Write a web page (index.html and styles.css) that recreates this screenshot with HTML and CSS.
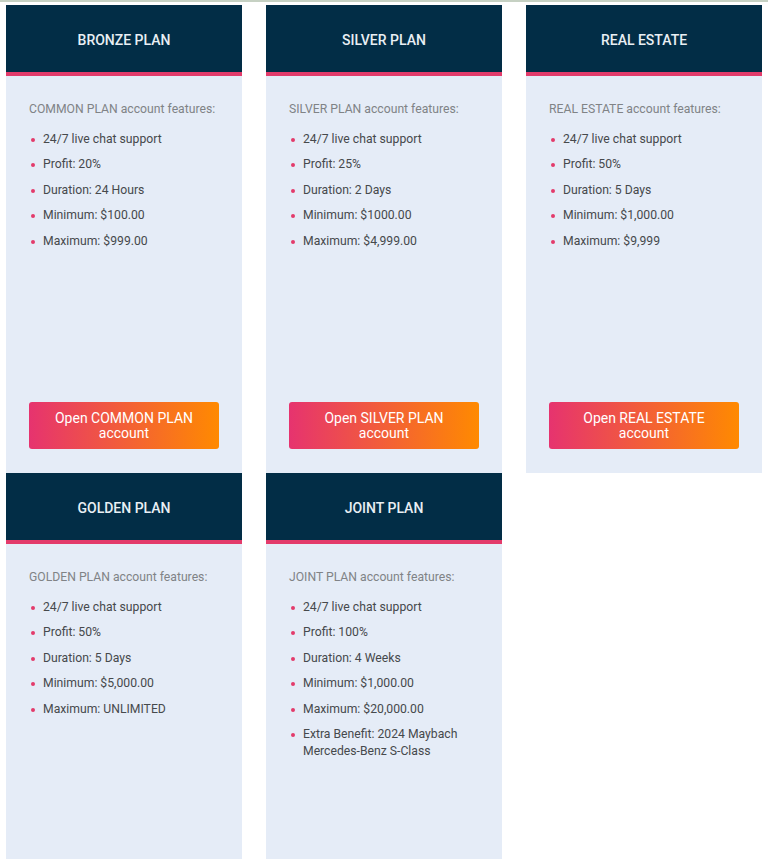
FILE: index.html
```html
<!DOCTYPE html>
<html lang="en">
<head>
  <meta charset="UTF-8" />
  <meta name="viewport" content="width=device-width, initial-scale=1.0"/>
  <title>Investment Plans</title>
  <link rel="stylesheet" href="styles.css">
</head>
<body>

  <div class="plans">
    <!-- Bronze -->
    <div class="plan-card">
      <div class="plan-header">BRONZE PLAN</div>
      <div class="plan-body">
        <p class="plan-intro">COMMON PLAN account features:</p>
        <ul class="plan-list">
          <li>24/7 live chat support</li>
          <li>Profit: 20%</li>
          <li>Duration: 24 Hours</li>
          <li>Minimum: $100.00</li>
          <li>Maximum: $999.00</li>
        </ul>
        <a class="plan-btn" href="#">Open COMMON PLAN<br>account</a>
      </div>
    </div>

    <!-- Silver -->
    <div class="plan-card">
      <div class="plan-header">SILVER PLAN</div>
      <div class="plan-body">
        <p class="plan-intro">SILVER PLAN account features:</p>
        <ul class="plan-list">
          <li>24/7 live chat support</li>
          <li>Profit: 25%</li>
          <li>Duration: 2 Days</li>
          <li>Minimum: $1000.00</li>
          <li>Maximum: $4,999.00</li>
        </ul>
        <a class="plan-btn" href="#">Open SILVER PLAN<br>account</a>
      </div>
    </div>

    <!-- Real estate -->
    <div class="plan-card">
      <div class="plan-header">REAL ESTATE</div>
      <div class="plan-body">
        <p class="plan-intro">REAL ESTATE account features:</p>
        <ul class="plan-list">
          <li>24/7 live chat support</li>
          <li>Profit: 50%</li>
          <li>Duration: 5 Days</li>
          <li>Minimum: $1,000.00</li>
          <li>Maximum: $9,999</li>
        </ul>
        <a class="plan-btn" href="#">Open REAL ESTATE<br>account</a>
      </div>
    </div>

    <!-- Golden -->
    <div class="plan-card">
      <div class="plan-header">GOLDEN PLAN</div>
      <div class="plan-body">
        <p class="plan-intro">GOLDEN PLAN account features:</p>
        <ul class="plan-list">
          <li>24/7 live chat support</li>
          <li>Profit: 50%</li>
          <li>Duration: 5 Days</li>
          <li>Minimum: $5,000.00</li>
          <li>Maximum: UNLIMITED</li>
        </ul>
        <a class="plan-btn" href="#">Open GOLDEN PLAN<br>account</a>
      </div>
    </div>

    <!-- Joint -->
    <div class="plan-card">
      <div class="plan-header">JOINT PLAN</div>
      <div class="plan-body">
        <p class="plan-intro">JOINT PLAN account features:</p>
        <ul class="plan-list">
          <li>24/7 live chat support</li>
          <li>Profit: 100%</li>
          <li>Duration: 4 Weeks</li>
          <li>Minimum: $1,000.00</li>
          <li>Maximum: $20,000.00</li>
          <li>Extra Benefit: 2024 Maybach Mercedes-Benz S-Class</li>
        </ul>
        <a class="plan-btn" href="#">Open JOINT PLAN<br>account</a>
      </div>
    </div>
  </div>

</body>
</html>
```

FILE: styles.css
```css
* {
  box-sizing: border-box;
  margin: 0;
  padding: 0;
}

body {
  font-family: Roboto, 'Liberation Sans', sans-serif;
  background: #fff;
  border-top: 2px solid #c6d1c3;
  padding: 3px 6px 0;
  overflow: hidden;
}

/* Grid of plan cards */
.plans {
  display: grid;
  grid-template-columns: repeat(3, 236px);
  column-gap: 24px;
  row-gap: 0;
}

.plan-card {
  display: flex;
  flex-direction: column;
  background: #e5ecf7;
}

.plan-header {
  height: 71px;
  display: flex;
  justify-content: center;
  align-items: center;
  background: #022d46;
  border-bottom: 4px solid #e33b6b;
  color: #e9eff4;
  font-size: 14px;
  font-weight: 500;
  padding-top: 3px;
}

.plan-body {
  display: flex;
  flex-direction: column;
  min-height: 397px;
  padding: 22.5px 23px 24px;
}

.plan-intro {
  font-size: 12.2px;
  line-height: 20px;
  color: #808386;
  margin-bottom: 12px;
  white-space: nowrap;
}

.plan-list {
  list-style: none;
  margin-bottom: 24px;
}

.plan-list li {
  position: relative;
  padding-left: 14px;
  font-size: 12.2px;
  line-height: 17px;
  color: #46494c;
  margin-bottom: 8.6px;
}

.plan-list li::before {
  content: "";
  position: absolute;
  left: 2px;
  top: 7px;
  width: 4px;
  height: 4px;
  border-radius: 50%;
  background: #e33b6b;
}

.plan-btn {
  margin-top: auto;
  display: block;
  height: 47px;
  padding-top: 8.5px;
  border-radius: 3px;
  background: linear-gradient(90deg, #e6336f, #ff8a00);
  color: #fff;
  text-align: center;
  text-decoration: none;
  font-size: 14px;
  font-weight: 400;
  line-height: 15px;
}
```
